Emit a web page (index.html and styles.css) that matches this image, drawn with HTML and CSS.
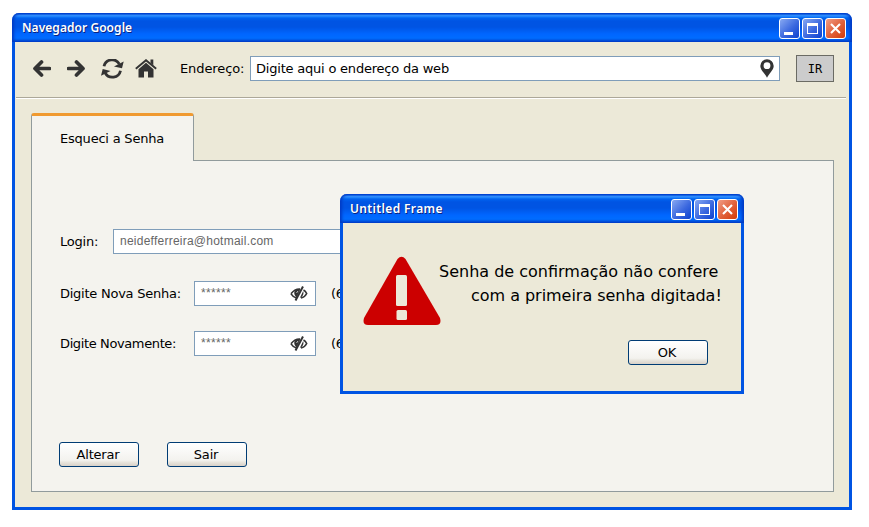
FILE: index.html
```html
<!DOCTYPE html>
<html lang="pt-BR">
<head>
<meta charset="utf-8">
<title>Navegador Google</title>
<link rel="stylesheet" href="styles.css">
</head>
<body>
<svg width="0" height="0" class="defs">
  <symbol id="eye" viewBox="0 0 18 15">
    <path d="M1 7.800Q4.500 3 9.500 3H10M1 7.800Q3 11 6.500 12M11 12Q15 11.200 16.700 7.500Q15.500 5 13.500 4" fill="none" stroke="#333" stroke-width="1.600"/>
    <path d="M10.500 3Q4.200 2.200 4.200 7Q4.200 9.500 6.500 11.500ZM13.200 5L9.800 12Q14.700 9.500 13.200 5Z" fill="#333"/>
    <path d="M13 .5L5.500 14.500" stroke="#333" stroke-width="2"/>
    <path d="M8 5L6.500 7" stroke="#fff" stroke-width=".7"/>
  </symbol>
  <symbol id="min" viewBox="0 0 21 21"><path d="M5 14h9v3H5z" fill="#fff"/></symbol>
  <symbol id="max" viewBox="0 0 21 21"><path d="M5 5h11v11H5zM6 8v7h9V8z" fill="#fff" fill-rule="evenodd"/></symbol>
  <symbol id="close" viewBox="0 0 21 21"><path d="M6 6l9 9M15 6l-9 9" stroke="#fff" stroke-width="2.100"/></symbol>
</svg>
<main class="window">
  <header class="titlebar">
    <span class="title main-title">Navegador Google</span>
    <span class="control"><svg><use href="#min"/></svg></span>
    <span class="control"><svg><use href="#max"/></svg></span>
    <span class="control close"><svg><use href="#close"/></svg></span>
  </header>
  <div class="content">
    <nav class="toolbar">
      <svg class="nav-icon" width="18" height="18" viewBox="0 0 18 18"><path d="M8.500 2L2 8.500L8.500 15M2.500 8.500h14" fill="none" stroke="#333" stroke-width="3.700" stroke-linecap="round" stroke-linejoin="round"/></svg>
      <svg class="nav-icon" width="18" height="18" viewBox="0 0 18 18"><path d="M9.500 2L16 8.500L9.500 15M15.500 8.500h-14" fill="none" stroke="#333" stroke-width="3.700" stroke-linecap="round" stroke-linejoin="round"/></svg>
      <svg class="nav-icon refresh" width="23" height="20" viewBox="0 0 23 20"><path d="M3 7.300A8.300 8.300 0 0 1 18.300 5M19.500 11.700A8.300 8.300 0 0 1 4.200 14" fill="none" stroke="#333" stroke-width="2.800"/><path d="M22.700 2.500L21 9.200L13 7.500ZM0 16.700L1.700 10L9.500 12Z" fill="#333"/></svg>
      <svg class="nav-icon home" width="22" height="20" viewBox="0 0 22 20"><path d="M.8 9.800L11 1.200l10.200 8.600" fill="none" stroke="#333" stroke-width="1.900"/><path d="M15.500 .5h2.800v6l-2.800-2.500zM11 3.800l7.500 6.400V18.500H13v-6H9v6H3.500v-8.300z" fill="#333"/></svg>
      <span class="text address-label">Endereço:</span>
      <div class="field address"><span class="text address-text">Digite aqui o endereço da web</span>
        <svg width="14" height="19" viewBox="0 0 14 19"><path d="M7 .3A6.700 6.700 0 0 0 .3 7C.3 11 5 14.500 7 18.800 9 14.500 13.700 11 13.700 7A6.700 6.700 0 0 0 7 .3Z" fill="#333"/><circle cx="7" cy="6.700" r="3.400" fill="#fff"/></svg>
      </div>
      <span class="go">IR</span>
    </nav>
    <div class="tab"><span class="text tab-text">Esqueci a Senha</span></div>
    <section class="panel">
      <div class="row login"><span class="text login-label">Login:</span><div class="field email"><span class="email-text">neidefferreira@hotmail.com</span></div></div>
      <div class="row password"><span class="text label">Digite Nova Senha:</span><div class="field secret"><span>******</span><svg width="18" height="15"><use href="#eye"/></svg></div><span class="text hint">(6</span></div>
      <div class="row again"><span class="text label again-label">Digite Novamente:</span><div class="field secret"><span>******</span><svg width="18" height="15"><use href="#eye"/></svg></div><span class="text hint">(6</span></div>
      <div class="actions"><button>Alterar</button><button>Sair</button></div>
    </section>
  </div>
</main>
<div class="window dialog" role="dialog">
  <header class="titlebar">
    <span class="title dialog-title">Untitled Frame</span>
    <span class="control"><svg><use href="#min"/></svg></span>
    <span class="control"><svg><use href="#max"/></svg></span>
    <span class="control close"><svg><use href="#close"/></svg></span>
  </header>
  <div class="content dialog-content">
    <div class="message">
      <svg width="78" height="70" viewBox="0 0 78 70"><path d="M34.500 3Q38.500-1.500 42.500 3L77 62Q79 69 73 69H5Q-1 69 1 62Z" fill="#c00"/><rect x="33" y="19" width="11" height="31" rx="1.500" fill="#ece9d8"/><rect x="33.500" y="54" width="10.500" height="10" rx="1.500" fill="#ece9d8"/></svg>
      <p><span class="line1">Senha de confirmação não confere</span><span class="line2">com a primeira senha digitada!</span></p>
    </div>
    <button class="ok">OK</button>
  </div>
</div>
</body>
</html>
```
FILE: styles.css
```css
* { box-sizing: border-box; }
body { margin: 0; height: 527px; padding: 13px 0 0 12px; background: #fff; font: 13px/16px "DejaVu Sans", sans-serif; color: #000; overflow: hidden; }
.defs { position: absolute; }
svg { display: block; flex: none; }
.window { width: 840px; height: 497px; display: flex; flex-direction: column; }
.titlebar { height: 29px; flex: none; display: flex; gap: 2px; padding: 5px 6px 0 10px; border-radius: 7px 7px 0 0;
  background: linear-gradient(#0054df 0, #0054df 1px, #3d95ff 2px, #288eff 3px, #0063f0 5px, #0054e3 8px, #0054e3 14px, #0066ff 21px, #006cff 25px, #005ce9 27px, #003fc9 29px);
  box-shadow: inset 2px 0 3px #003bc5, inset -2px 0 3px #003bc5; }
.title { font: 600 12px/20px "Noto Sans", sans-serif; color: #fff; text-shadow: 1px 1px #0a2380; flex: 1; white-space: nowrap; }
.main-title { letter-spacing: .05px; }
.dialog-title { letter-spacing: .36px; }
.control { width: 21px; height: 21px; border: 1px solid #fff; border-radius: 3px; background: linear-gradient(135deg, #88a9f2, #3b68df 55%, #0c42cf); }
.control.close { background: linear-gradient(135deg, #f09c85, #e05f38 55%, #d33b09); }
.control svg { width: 21px; height: 21px; margin: -1px; }
.content { flex: 1; background: #ece9d8; border: solid #0054e3; border-width: 0 3px 3px; }
.toolbar { height: 56px; margin: 0 3px 0 1px; padding: 0 10px 2px 17px; display: flex; align-items: center; border-bottom: 1px solid #aca899; box-shadow: 0 1px #fff; }
.nav-icon { margin-right: 16px; }
.refresh { margin-right: 11px; }
.home { margin-right: 23px; }
.text { white-space: nowrap; letter-spacing: -.21px; }
.address-label { width: 70px; letter-spacing: -.1px; }
.field { height: 25px; border: 1px solid #7f9db9; background: #fff; display: flex; align-items: center; justify-content: space-between; padding: 0 5px; }
.address { width: 530px; }
.go { margin-left: 16px; width: 38px; height: 27px; border: 1.500px solid #6b6b64; background: #ccc; text-align: center; font: 12px/27px "DejaVu Sans Mono", monospace; }
.tab { width: 163px; height: 48px; margin: 15px 0 0 16px; padding: 15px 0 0 28px; border: 1px solid #919b9c; border-top: 3px solid #f09a30; border-bottom: 0; border-radius: 3px 3px 0 0; background: #f4f3ee; position: relative; z-index: 1; }
.panel { width: 803px; height: 332px; margin: -1px 0 0 16px; border: 1px solid #919b9c; background: #f4f3ee; padding: 68px 0 0 27px; }
.row { display: flex; align-items: center; height: 25px; }
.login-label { width: 54px; padding-left: 1px; }
.email { width: 282px; padding: 0 6px 2px; font: 12px/16px "Liberation Sans", sans-serif; letter-spacing: .24px; color: #666; }
.password { margin-top: 27px; }
.again { margin-top: 25px; }
.label { width: 135px; padding-left: 1px; letter-spacing: -.25px; }
.again-label { letter-spacing: -.38px; }
.secret { width: 122px; padding: 0 7px 0 6px; font: 12px/16px "Liberation Sans", sans-serif; letter-spacing: .33px; color: #666; }
.secret span { padding-bottom: 1px; }
.hint { margin-left: 15px; }
.actions { display: flex; gap: 28px; margin-top: 86px; }
button { width: 80px; height: 25px; padding: 0 2px 0 0; border: 1px solid #003c74; border-radius: 3px; background: linear-gradient(#fff, #f3f2ee 75%, #e6e3db 85%, #d8d1c8); font: 13px/20px "DejaVu Sans", sans-serif; letter-spacing: -.2px; color: #000; }
.dialog { position: absolute; left: 340px; top: 194px; width: 404px; height: 200px; }
.dialog-content { display: flex; flex-direction: column; padding: 33px 0 0 20px; }
.message { display: flex; height: 84px; }
.message p { margin: 4px 0 0 -2px; font-size: 16px; line-height: 24px; white-space: nowrap; }
.message span { display: block; }
.line2 { padding-left: 32px; letter-spacing: -.03px; }
.ok { margin-left: 265px; }
```
